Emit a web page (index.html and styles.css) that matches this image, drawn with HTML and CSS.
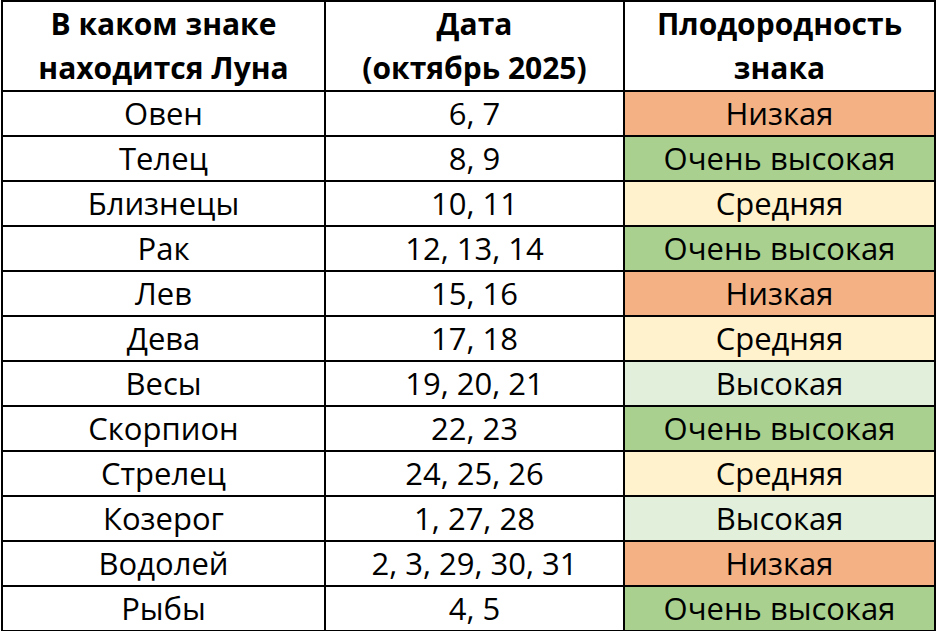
FILE: index.html
```html
<!DOCTYPE html>
<html lang="ru">
<head>
<meta charset="utf-8">
<title>Луна октябрь 2025</title>
<link rel="stylesheet" href="styles.css">
</head>
<body>
<table class="moon">
  <colgroup>
    <col class="c1">
    <col class="c2">
    <col class="c3">
  </colgroup>
  <thead>
    <tr class="head">
      <th>В каком знаке<br>находится Луна</th>
      <th>Дата<br>(октябрь 2025)</th>
      <th>Плодородность<br>знака</th>
    </tr>
  </thead>
  <tbody>
    <tr><td>Овен</td><td>6, 7</td><td class="low">Низкая</td></tr>
    <tr><td>Телец</td><td>8, 9</td><td class="vhigh">Очень высокая</td></tr>
    <tr><td>Близнецы</td><td>10, 11</td><td class="mid">Средняя</td></tr>
    <tr><td>Рак</td><td>12, 13, 14</td><td class="vhigh">Очень высокая</td></tr>
    <tr><td>Лев</td><td>15, 16</td><td class="low">Низкая</td></tr>
    <tr><td>Дева</td><td>17, 18</td><td class="mid">Средняя</td></tr>
    <tr><td>Весы</td><td>19, 20, 21</td><td class="high">Высокая</td></tr>
    <tr><td>Скорпион</td><td>22, 23</td><td class="vhigh">Очень высокая</td></tr>
    <tr><td>Стрелец</td><td>24, 25, 26</td><td class="mid">Средняя</td></tr>
    <tr><td>Козерог</td><td>1, 27, 28</td><td class="high">Высокая</td></tr>
    <tr><td>Водолей</td><td>2, 3, 29, 30, 31</td><td class="low">Низкая</td></tr>
    <tr><td>Рыбы</td><td>4, 5</td><td class="vhigh">Очень высокая</td></tr>
  </tbody>
</table>
</body>
</html>
```

FILE: styles.css
```css
html, body {
  margin: 0;
  padding: 0;
  background: #ffffff;
}
body {
  padding: 0 0 0 1px;
  font-family: "Open Sans", Lato, "Liberation Sans", sans-serif;
  color: #000;
}
.moon {
  border-collapse: collapse;
  table-layout: fixed;
  width: 935px;
}
.c1 { width: 323px; }
.c2 { width: 299px; }
.c3 { width: 311px; }
.moon th, .moon td {
  border: 2px solid #000;
  padding: 0;
  text-align: center;
  vertical-align: middle;
}
.moon td {
  height: 43px;
  font-size: 31px;
  line-height: 43px;
}
.moon th {
  height: 88px;
  font-size: 30px;
  font-weight: 700;
  line-height: 44px;
}
.low { background: #f4b183; }
.vhigh { background: #a9d08e; }
.mid { background: #fff2cc; }
.high { background: #e2efda; }
```
